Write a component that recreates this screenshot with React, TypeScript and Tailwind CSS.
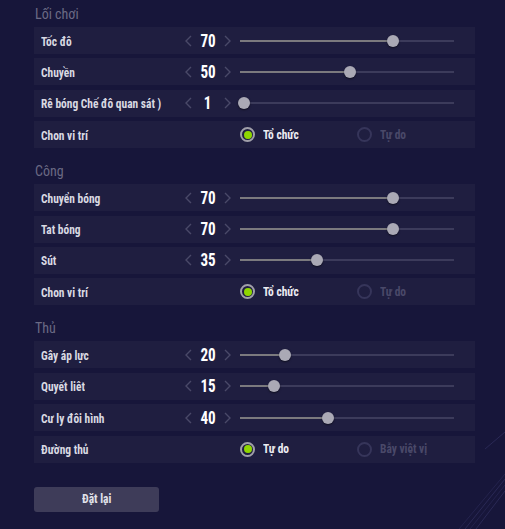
type SliderRow = { kind: "slider"; label: string; value: number };
type RadioRow = { kind: "radio"; label: string; options: [string, string]; selected: number };
type Row = SliderRow | RadioRow;

const sections: { title: string; rows: Row[] }[] = [
  {
    title: "Lối chơi",
    rows: [
      { kind: "slider", label: "Tốc đô", value: 70 },
      { kind: "slider", label: "Chuyền", value: 50 },
      { kind: "slider", label: "Rê bóng Chế đô quan sát )", value: 1 },
      { kind: "radio", label: "Chon vi trí", options: ["Tổ chức", "Tự do"], selected: 0 },
    ],
  },
  {
    title: "Công",
    rows: [
      { kind: "slider", label: "Chuyển bóng", value: 70 },
      { kind: "slider", label: "Tat bóng", value: 70 },
      { kind: "slider", label: "Sút", value: 35 },
      { kind: "radio", label: "Chon vi trí", options: ["Tổ chức", "Tự do"], selected: 0 },
    ],
  },
  {
    title: "Thủ",
    rows: [
      { kind: "slider", label: "Gây áp lực", value: 20 },
      { kind: "slider", label: "Quyết liêt", value: 15 },
      { kind: "slider", label: "Cư ly đôi hình", value: 40 },
      { kind: "radio", label: "Đường thủ", options: ["Tự do", "Bẫy việt vị"], selected: 0 },
    ],
  },
];

const FONT = { fontFamily: "'Roboto Condensed', 'Liberation Sans', sans-serif" };

function Chevron({ dir }: { dir: "l" | "r" }) {
  return (
    <svg width="7" height="12" viewBox="0 0 7 12" className="block">
      <polyline
        points={dir === "l" ? "6,1 1,6 6,11" : "1,1 6,6 1,11"}
        fill="none"
        stroke="#4a4968"
        strokeWidth="1.4"
      />
    </svg>
  );
}

function Label({ text }: { text: string }) {
  return (
    <div className="w-[142px] shrink-0">
      <span className="inline-block origin-left scale-x-[0.88] text-[13px] font-bold text-[#d9d9e2] whitespace-nowrap">
        {text}
      </span>
    </div>
  );
}

function Slider({ row }: { row: SliderRow }) {
  const pos = 1.5 + 2.164 * row.value;
  return (
    <>
      <div className="flex w-[50px] shrink-0 items-center justify-between px-[2px]">
        <Chevron dir="l" />
        <span className="inline-block scale-x-[0.84] text-[18px] font-bold leading-none text-white">
          {row.value}
        </span>
        <Chevron dir="r" />
      </div>
      <div className="relative ml-[7px] flex h-[12px] w-[214px] items-center">
        <div className="h-[2px] w-full bg-[#3c3b5b]" />
        <div className="absolute left-0 top-[5px] h-[2px] bg-[#7b7a7e]" style={{ width: `${pos}px` }} />
        <div
          className="absolute top-0 h-[12px] w-[12px] -translate-x-1/2 rounded-full bg-[#aaa9b5] shadow-[0_1px_2px_rgba(0,0,0,0.5)]"
          style={{ left: `${pos}px` }}
        />
      </div>
    </>
  );
}

function Radio({ row }: { row: RadioRow }) {
  return (
    <div className="ml-[57px] flex items-center">
      {row.options.map((opt, i) => {
        const on = i === row.selected;
        return (
          <div key={opt} className="flex w-[117px] items-center">
            <div
              className={
                on
                  ? "flex h-[15px] w-[15px] items-center justify-center rounded-full border-2 border-[#a09fa9]"
                  : "h-[15px] w-[15px] rounded-full border-2 border-[#36355a]"
              }
            >
              {on && <div className="h-[8px] w-[8px] rounded-full bg-[#8fd600]" />}
            </div>
            <span
              className={
                "ml-[8px] inline-block origin-left scale-x-[0.88] text-[13px] font-bold whitespace-nowrap " +
                (on ? "text-[#ececf2]" : "text-[#4a4969]")
              }
            >
              {opt}
            </span>
          </div>
        );
      })}
    </div>
  );
}

export default function App() {
  return (
    <div className="relative h-[529px] w-[505px] overflow-hidden bg-[#17163a]" style={FONT}>
      <svg className="absolute bottom-0 right-0" width="60" height="100" viewBox="0 0 60 100">
        <line x1="60" y1="3" x2="40" y2="20" stroke="#2a2955" strokeWidth="1" />
        <line x1="60" y1="45" x2="14" y2="100" stroke="#24234d" strokeWidth="1" />
        <line x1="60" y1="50" x2="20" y2="100" stroke="#2a2955" strokeWidth="1" />
        <line x1="60" y1="56" x2="25" y2="100" stroke="#24234d" strokeWidth="1" />
        <line x1="60" y1="62" x2="31" y2="100" stroke="#2a2955" strokeWidth="1" />
      </svg>
      <div className="relative flex w-[475px] flex-col pl-[34px]">
        {sections.map((s, si) => (
          <div key={si} className={si > 0 ? "mt-[9px]" : ""}>
            <div className="flex h-[27px] items-end pb-[6px] pl-[1px]">
              <span className="text-[14px] leading-none text-[#6b6a84]">{s.title}</span>
            </div>
            <div className="flex flex-col gap-[4.4px]">
              {s.rows.map((r, ri) => (
                <div key={ri} className="flex h-[27px] items-center bg-[#1f1e40] pl-[7px]">
                  <Label text={r.label} />
                  {r.kind === "slider" ? <Slider row={r} /> : <Radio row={r} />}
                </div>
              ))}
            </div>
          </div>
        ))}
        <div className="mt-[24px]">
          <button className="flex h-[25px] w-[125px] items-center justify-center rounded-[3px] bg-[#3e3c59]">
            <span className="inline-block scale-x-[0.88] text-[13px] font-bold text-[#e2e2ea]">Đặt lại</span>
          </button>
        </div>
      </div>
    </div>
  );
}
